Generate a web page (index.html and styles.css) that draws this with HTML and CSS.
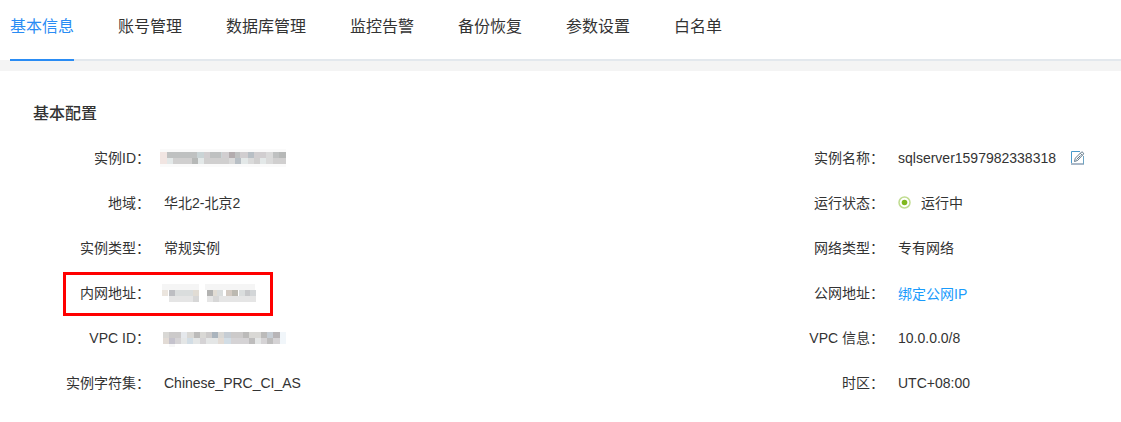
FILE: index.html
```html
<!DOCTYPE html>
<html lang="zh-CN">
<head>
    <meta charset="UTF-8">
    <meta name="viewport" content="width=device-width, initial-scale=1.0">
    <title>基本信息</title>
    <link rel="stylesheet" href="styles.css">
</head>
<body>
    <header>
        <nav class="tabs">
            <a href="#info" class="active">基本信息</a>
            <a href="#account">账号管理</a>
            <a href="#database">数据库管理</a>
            <a href="#monitor">监控告警</a>
            <a href="#backup">备份恢复</a>
            <a href="#params">参数设置</a>
            <a href="#whitelist">白名单</a>
        </nav>
    </header>
    <main>
        <h2>基本配置</h2>
        <dl class="config">
            <div class="item">
                <dt>实例ID：</dt>
                <dd>
                    <!-- masked value -->
                    <svg class="mask" width="126" height="18" viewBox="0 0 126 18" shape-rendering="crispEdges">
                        <path fill="#fafafa" d="M0 0h126v18H0z"/>
                        <path fill="#f1e5e2" d="M0 3h7v12H0z"/>
                        <path fill="#bfc1c1" d="M7 3h119v6H7z"/>
                        <path fill="#d0cfcf" d="M7 9h119v6H7z"/>
                        <path fill="#cad4d6" d="M37 3h7v6h-7zM61 3h7v6h-7z"/>
                        <path fill="#d1ced0" d="M44 3h6v6h-6zM62 3h7v6h-7zM80 3h8v6h-8zM94 3h14v6H94z"/>
                        <path fill="#b3acae" d="M69 3h6v6h-6z"/>
                        <path fill="#b8bfc5" d="M88 3h6v6h-6zM75 9h6v6h-6z"/>
                        <path fill="#e3e8e8" d="M7 9h6v6H7zM38 9h6v6h-6zM81 9h7v6h-7zM100 9h6v6h-6z"/>
                        <path fill="#dadada" d="M106 3h7v6h-7zM69 9h6v6h-6zM88 9h6v6h-6zM106 9h7v6h-7z"/>
                        <path fill="#b6b8b7" d="M119 3h7v6h-7zM32 9h6v6h-6z"/>
                    </svg>
                </dd>
            </div>
            <div class="item">
                <dt>实例名称：</dt>
                <dd>
                    sqlserver1597982338318
                    <button class="edit" type="button" aria-label="编辑">
                        <svg width="14" height="14" viewBox="0 0 14 14" fill="none">
                            <path stroke="#4a9acb" d="M9 .5H.5v12"/>
                            <path stroke="#a9b8c8" stroke-width="2" d="M0 13h13"/>
                            <path stroke="#6ba4c4" d="M12.5 5v8"/>
                            <path stroke="#61788a" d="M3.5 10.5l.8-3.3 6-6c.9-.9 2.9.9 2.1 1.9L6.7 9.4zM9.4 2.3l2 2M5.5 8.5l4-4"/>
                        </svg>
                    </button>
                </dd>
            </div>
            <div class="item">
                <dt>地域：</dt>
                <dd>华北2-北京2</dd>
            </div>
            <div class="item">
                <dt>运行状态：</dt>
                <dd>
                    <svg class="status" width="13" height="13" viewBox="0 0 13 13">
                        <circle cx="6.5" cy="6.5" r="5.5" fill="#fff" stroke="#c0dc90" stroke-width="1.5"/>
                        <circle cx="6.5" cy="6.5" r="2.8" fill="#7fb71e"/>
                    </svg>
                    运行中
                </dd>
            </div>
            <div class="item">
                <dt>实例类型：</dt>
                <dd>常规实例</dd>
            </div>
            <div class="item">
                <dt>网络类型：</dt>
                <dd>专有网络</dd>
            </div>
            <div class="item marked">
                <dt>内网地址：</dt>
                <dd>
                    <svg class="mask" width="96" height="18" viewBox="0 0 96 18" shape-rendering="crispEdges">
                        <path fill="#f5f5f5" d="M2 0h37v6H2zM45 0h50v6H45z"/>
                        <path fill="#ebe5de" d="M2 6h6v6H2z"/>
                        <path fill="#bdbec2" d="M9 6h6v6H9z"/>
                        <path fill="#dadddd" d="M15 6h18v6H15zM57 6h6v6h-6zM79 6h6v6h-6z"/>
                        <path fill="#e1dcd4" d="M33 6h6v6h-6zM53 6h4v6h-4z"/>
                        <path fill="#b2b2b1" d="M47 6h6v6h-6z"/>
                        <path fill="#d3cac2" d="M66 6h6v6h-6z"/>
                        <path fill="#bcb9b1" d="M72 6h6v6h-6z"/>
                        <path fill="#c7c8ca" d="M85 6h5v6h-5z"/>
                        <path fill="#d3d6d8" d="M90 6h6v6h-6z"/>
                        <path fill="#e5e5e5" d="M9 12h30v6H9zM47 12h49v6H47z"/>
                        <path fill="#d7d7d7" d="M33 12h6v6h-6zM53 12h6v6h-6z"/>
                    </svg>
                </dd>
            </div>
            <div class="item">
                <dt>公网地址：</dt>
                <dd><a href="#bind">绑定公网IP</a></dd>
            </div>
            <div class="item">
                <dt>VPC ID：</dt>
                <dd>
                    <svg class="mask" width="126" height="18" viewBox="0 0 126 18" shape-rendering="crispEdges">
                        <path fill="#d9d8d5" d="M3 3h117v6H3z"/>
                        <path fill="#cccaca" d="M9 3h12v6H9zM46 3h6v6h-6zM71 3h18v6H71z"/>
                        <path fill="#e5e8ec" d="M21 3h6v6h-6z"/>
                        <path fill="#bcbbba" d="M34 3h6v6h-6zM83 3h6v6h-6zM101 3h6v6h-6z"/>
                        <path fill="#aab4bd" d="M52 3h6v6h-6z"/>
                        <path fill="#c6cdd4" d="M64 3h7v6h-7zM107 3h6v6h-6z"/>
                        <path fill="#b8b5b7" d="M113 3h7v6h-7z"/>
                        <path fill="#d5d3d5" d="M9 9h18v6H9zM40 9h6v6h-6zM71 9h49v6H71z"/>
                        <path fill="#e2dbd5" d="M3 9h6v6H3zM58 9h6v6h-6z"/>
                        <path fill="#c4c2cc" d="M9 9h6v6H9z"/>
                        <path fill="#e4e6e6" d="M21 9h19v6H21zM46 9h12v6H46zM95 9h6v6h-6z"/>
                        <path fill="#d2dde5" d="M27 9h6v6h-6zM64 9h7v6h-7z"/>
                        <path fill="#bebdbd" d="M89 9h6v6h-6zM107 9h6v6h-6z"/>
                        <path fill="#f1f6fa" d="M120 3h6v12h-6z"/>
                        <path fill="#f7f7f7" d="M9 15h6v3H9z"/>
                    </svg>
                </dd>
            </div>
            <div class="item">
                <dt>VPC 信息：</dt>
                <dd>10.0.0.0/8</dd>
            </div>
            <div class="item">
                <dt>实例字符集：</dt>
                <dd>Chinese_PRC_CI_AS</dd>
            </div>
            <div class="item">
                <dt>时区：</dt>
                <dd>UTC+08:00</dd>
            </div>
        </dl>
    </main>
</body>
</html>
```
FILE: styles.css
```css
* {
    box-sizing: border-box;
}
body {
    display: flex;
    flex-direction: column;
    min-height: 100vh;
    margin: 0;
    font-family: "Liberation Sans", "Noto Sans CJK SC", sans-serif;
    font-size: 14px;
    line-height: 20px;
    color: #333;
    background-color: #f4f4f4;
}
header {
    background-color: #fff;
    padding-left: 10px;
}

/* Tabs */
.tabs {
    display: flex;
    gap: 44px;
    margin-bottom: -1px;
    border-bottom: 2px solid #e3e8ed;
}
.tabs a {
    margin-bottom: -2px;
    padding: 15px 0 20px;
    border-bottom: 2px solid transparent;
    font-size: 16px;
    line-height: 24px;
    color: #333;
    text-decoration: none;
    white-space: nowrap;
}
.tabs a.active {
    color: #2a8cf4;
    border-bottom-color: #2a8cf4;
}

/* Config section */
main {
    flex: 1;
    margin-top: 11px;
    padding: 31px 10px 16px;
    background-color: #fff;
}
h2 {
    margin: 0 0 9px 23px;
    font-size: 16px;
    line-height: 24px;
    font-weight: 500;
}
.config {
    display: grid;
    grid-template-columns: 2fr 1fr;
    margin: 0;
}
.item {
    position: relative;
    display: flex;
    align-items: center;
    gap: 14px;
    height: 45px;
}
dt {
    width: 140px;
    flex: none;
    text-align: right;
}
dd {
    display: flex;
    align-items: center;
    margin: 0;
    white-space: nowrap;
}
dd a {
    padding-top: 2px;
    color: #1a9bfc;
    text-decoration: none;
}
.mask {
    margin-left: -4px;
}
.status {
    margin-right: 10px;
}
.edit {
    display: flex;
    margin-left: 15px;
    padding: 0;
    border: 0;
    background: none;
    cursor: pointer;
}

/* Red frame around the intranet address */
.marked::after {
    content: "";
    position: absolute;
    top: 2px;
    left: 53px;
    box-sizing: border-box;
    width: 210px;
    height: 44px;
    border: 3px solid #f00;
}
```
